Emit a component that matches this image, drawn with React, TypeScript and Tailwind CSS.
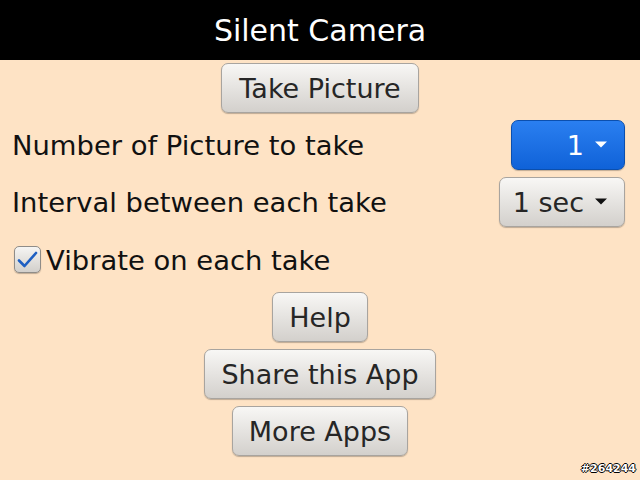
import { ReactNode } from "react";

const font = { fontFamily: '"DejaVu Sans", "Noto Sans", sans-serif' };

const btn =
  "flex items-center justify-center h-[50px] pt-[3px] rounded-[7px] border border-[#a8a49f] bg-gradient-to-b from-[#f8f7f5] to-[#d3d0cc] text-[#262626] text-[27px] shadow-[0_1px_1px_rgba(0,0,0,0.25)]";

function Button({ children, width }: { children: ReactNode; width: string }) {
  return <div className={`${btn} ${width}`}>{children}</div>;
}

function Caret({ color }: { color: string }) {
  return (
    <svg width="12" height="7" viewBox="0 0 12 7" className="ml-[11px] -mt-[5px]">
      <path d="M0 0.5 L12 0.5 L6 6.5 Z" fill={color} />
    </svg>
  );
}

function Row({ label, children }: { label: string; children: ReactNode }) {
  return (
    <div className="flex items-center justify-between h-[50px] pl-[12px] pr-[15px] mt-[7px]">
      <span className="text-[27.4px] text-[#111] pt-[2px]">{label}</span>
      {children}
    </div>
  );
}

export default function App() {
  return (
    <div className="relative w-[640px] h-[480px] bg-[#fee3c5] overflow-hidden" style={font}>
      <div className="h-[60px] bg-black flex items-center justify-center text-white text-[30px] pt-[1px]">
        Silent Camera
      </div>
      <div className="flex flex-col">
        <div className="flex justify-center mt-[3px]">
          <Button width="w-[198px]">Take Picture</Button>
        </div>
        <Row label="Number of Picture to take">
          <div className="flex items-center justify-end w-[114px] h-[50px] pt-[3px] pr-[17px] rounded-[7px] border border-[#0b4fae] bg-gradient-to-b from-[#2a7ff0] to-[#0f62d8] text-white text-[27px] shadow-[0_1px_1px_rgba(0,0,0,0.25)]">
            1
            <Caret color="#ffffff" />
          </div>
        </Row>
        <Row label="Interval between each take">
          <div className={`${btn} w-[126px] !justify-end pr-[17px]`}>
            1 sec
            <Caret color="#111111" />
          </div>
        </Row>
        <div className="flex items-center h-[55px] mt-[5px] pl-[14px]">
          <div className="w-[27px] h-[27px] rounded-[5px] border border-[#8f8c88] bg-gradient-to-b from-[#f6f5f3] to-[#d2cfcb] flex items-center justify-center shadow-[0_1px_1px_rgba(0,0,0,0.25)]">
            <svg width="21" height="18" viewBox="0 0 21 18">
              <path d="M2 9.5 L7.5 15 L19 2" fill="none" stroke="#1e5fc2" strokeWidth="2.6" strokeLinecap="round" strokeLinejoin="round" />
            </svg>
          </div>
          <span className="ml-[5px] text-[27.4px] text-[#111] pt-[2px]">Vibrate on each take</span>
        </div>
        <div className="flex flex-col items-center gap-[7px] mt-[5px]">
          <Button width="w-[96px]">Help</Button>
          <Button width="w-[232px]">Share this App</Button>
          <Button width="w-[176px]">More Apps</Button>
        </div>
      </div>
      <div
        className="absolute right-[4px] bottom-[3px] text-[11px] font-bold text-white"
        style={{ fontFamily: '"DejaVu Sans", sans-serif', textShadow: "1px 0 0 #000, -1px 0 0 #000, 0 1px 0 #000, 0 -1px 0 #000" }}
      >
        #264244
      </div>
    </div>
  );
}
